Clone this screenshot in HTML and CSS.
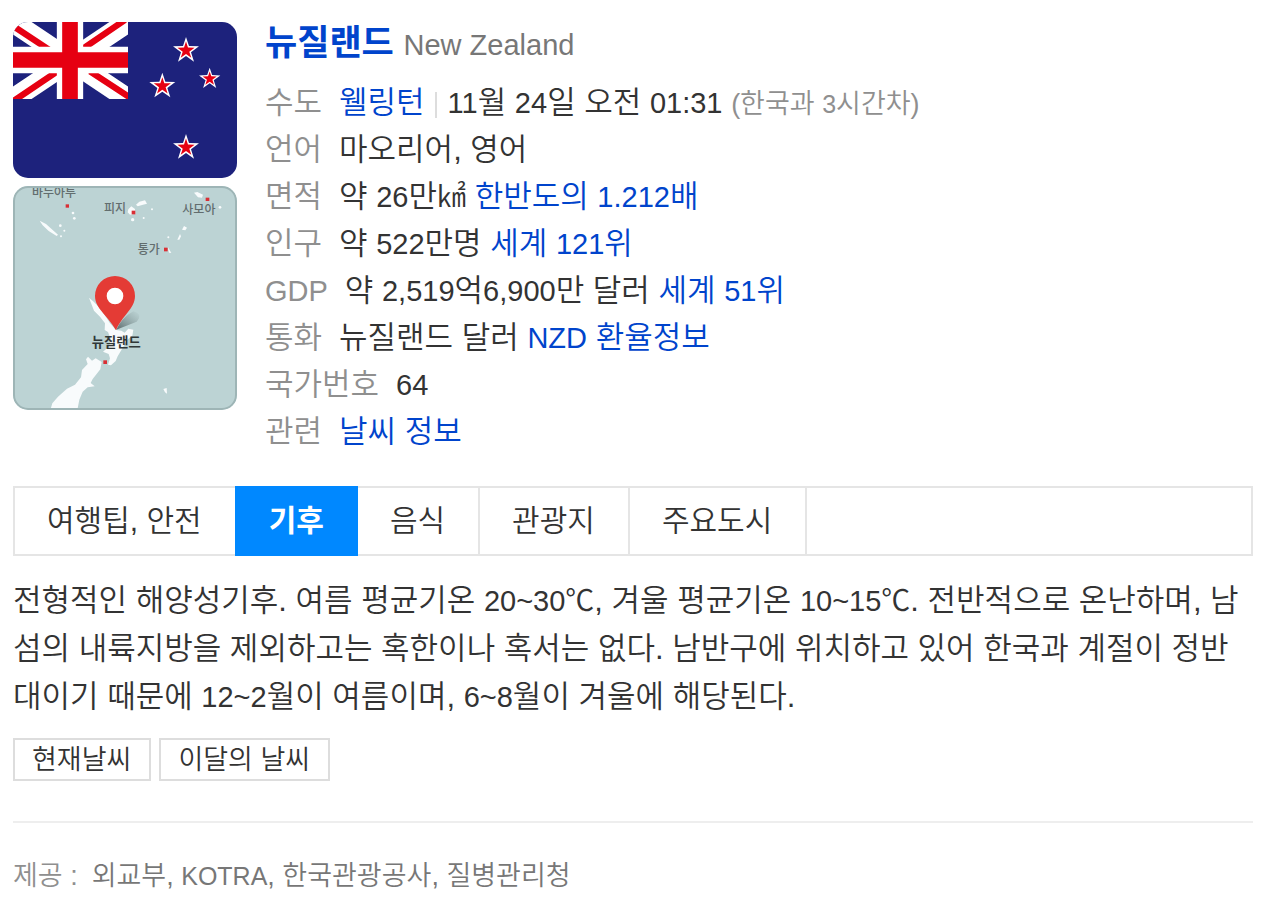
FILE: index.html
```html
<!DOCTYPE html>
<html lang="ko">
<head>
<meta charset="utf-8">
<meta name="viewport" content="width=device-width, initial-scale=1">
<title>뉴질랜드</title>
<link rel="stylesheet" href="styles.css">
</head>
<body>
<main class="card">
  <section class="summary">
    <div class="thumbs">
      <svg class="flag" viewBox="39 36 672 468" role="img" aria-label="뉴질랜드 국기">
        <defs>
          <clipPath id="canton"><rect x="39" y="36" width="345" height="231"/></clipPath>
          <polygon id="star" points="0,-40 9,-13 39,-12 15,6 24,34 0,17 -24,34 -15,6 -39,-12 -9,-13"/>
          <g id="nzstar"><use href="#star" fill="#fff"/><use href="#star" fill="#e60012" transform="scale(.66)"/></g>
        </defs>
        <rect x="39" y="36" width="672" height="468" fill="#1d227c"/>
        <g clip-path="url(#canton)">
          <path d="M39 36 384 267M39 267 384 36" stroke="#fff" stroke-width="62"/>
          <path d="M39 48 150 121M250 115 375 30M39 274 172 184M270 184 395 266" stroke="#e60012" stroke-width="19"/>
          <path d="M210 36V267M39 150H384" stroke="#fff" stroke-width="79"/>
          <path d="M210 36V267M39 150H384" stroke="#e60012" stroke-width="47"/>
        </g>
        <use href="#nzstar" x="558" y="121"/>
        <use href="#nzstar" x="487" y="228"/>
        <use href="#nzstar" transform="translate(629 206) scale(.82)"/>
        <use href="#nzstar" x="558" y="412"/>
      </svg>
      <svg class="map" viewBox="39 18 672 672" role="img" aria-label="뉴질랜드 지도">
        <defs>
          <linearGradient id="shade" x1="0" y1="1" x2="1" y2="0">
            <stop offset="0" stop-color="#4f5f60" stop-opacity=".9"/>
            <stop offset="1" stop-color="#7d9293" stop-opacity="0"/>
          </linearGradient>
        </defs>
        <rect x="39" y="18" width="672" height="672" fill="#bcd3d4"/>
        <g fill="#f8fbfc">
          <path d="M267 353 281 365 305 390 330 430 348 450 364 452 374 458 385 446 400 449 397 467 381 480 366 507 353 529 347 543 333 556 324 554 330 535 326 522 309 515 326 500 333 480 324 456 314 450 315 430 300 410 282 392Z"/>
          <path d="M264 530 276 542 287 535 305 546 301 568 278 597 272 609 284 619 263 622 248 635 238 659 232 690 151 690 157 670 174 650 201 626 225 614 243 592 246 570 263 552 258 538Z"/>
          <path d="M119 122 138 132 158 150 174 164 170 168 146 153 128 136Z"/>
          <path d="M385 88 394 79 405 87 406 101 390 104 383 97ZM408 74 418 65 435 61 441 71 429 74 413 79ZM582 38 592 36 609 44 606 53 594 52ZM546 149 552 138 561 143 556 151ZM490 627 500 624 501 641 495 637ZM532 179 540 162 543 169 538 179Z"/>
          <circle cx="219" cy="99" r="4"/><circle cx="223" cy="115" r="4"/><circle cx="181" cy="137" r="4"/><circle cx="193" cy="152" r="3"/><circle cx="183" cy="169" r="3"/><circle cx="398" cy="119" r="5"/><circle cx="431" cy="114" r="3"/><circle cx="456" cy="88" r="3"/><circle cx="660" cy="82" r="4"/><circle cx="505" cy="172" r="3"/><path d="M503 200 514 219 507 218Z"/>
        </g>
        <g fill="#d92f35">
          <rect x="197" y="73" width="10" height="10"/><rect x="395" y="92" width="11" height="11"/><rect x="617" y="53" width="11" height="10"/><rect x="492" y="203" width="11" height="11"/><rect x="310" y="541" width="11" height="11"/>
        </g>
        <g class="places">
          <text x="96" y="52">바누아투</text>
          <text x="312" y="99">피지</text>
          <text x="547" y="102">사모아</text>
          <text x="413" y="221">통가</text>
        </g>
        <path d="M349 449Q366 412 400 394Q430 403 410 425Z" fill="url(#shade)"/>
        <path d="M348 451C325 408 285 386 285 348A60 60 0 0 1 405 348C405 386 365 408 348 451Z" fill="#e43b35"/>
        <circle cx="345" cy="348" r="25" fill="#fff"/>
        <text class="here" x="275" y="500">뉴질랜드</text>
        <rect x="42" y="21" width="666" height="666" rx="42" fill="none" stroke="#9eb5b6" stroke-width="6"/>
      </svg>
    </div>
    <div class="details">
      <h1><a href="#nz">뉴질랜드</a> <span class="english">New Zealand</span></h1>
      <dl>
        <div><dt>수도</dt><dd><a href="#wellington">웰링턴</a><i class="bar"></i><span class="num">11</span>월 <span class="num">24</span>일 오전 <span class="num">01:31</span> <span class="note">(한국과 <span class="latin">3</span>시간차)</span></dd></div>
        <div><dt>언어</dt><dd>마오리어, 영어</dd></div>
        <div><dt>면적</dt><dd>약 <span class="num">26</span>만<span class="num">㎢</span> <a href="#area">한반도의 <span class="num">1.212</span>배</a></dd></div>
        <div><dt>인구</dt><dd>약 <span class="num">522</span>만명 <a href="#population">세계 <span class="num">121</span>위</a></dd></div>
        <div><dt><span class="num">GDP</span></dt><dd>약 <span class="num">2,519</span>억<span class="num">6,900</span>만 달러 <a href="#gdp">세계 <span class="num">51</span>위</a></dd></div>
        <div><dt>통화</dt><dd>뉴질랜드 달러 <a href="#currency"><span class="num">NZD</span> 환율정보</a></dd></div>
        <div><dt>국가번호</dt><dd><span class="num">64</span></dd></div>
        <div><dt>관련</dt><dd><a href="#weather">날씨 정보</a></dd></div>
      </dl>
    </div>
  </section>
  <div class="tabs" role="tablist">
    <button type="button" role="tab" aria-selected="false">여행팁, 안전</button>
    <button type="button" role="tab" aria-selected="true" class="active">기후</button>
    <button type="button" role="tab" aria-selected="false">음식</button>
    <button type="button" role="tab" aria-selected="false">관광지</button>
    <button type="button" role="tab" aria-selected="false">주요도시</button>
  </div>
  <p class="climate">전형적인 해양성기후. 여름 평균기온 <span class="num">20~30℃</span>, 겨울 평균기온 <span class="num">10~15℃</span>. 전반적으로 온난하며, 남섬의 내륙지방을 제외하고는 혹한이나 혹서는 없다. 남반구에 위치하고 있어 한국과 계절이 정반대이기 때문에 <span class="num">12~2</span>월이 여름이며, <span class="num">6~8</span>월이 겨울에 해당된다.</p>
  <div class="more">
    <a href="#now">현재날씨</a>
    <a href="#month">이달의 날씨</a>
  </div>
  <footer><span class="by">제공 :</span><span>외교부, <span class="latin">KOTRA</span>, 한국관광공사, 질병관리청</span></footer>
</main>
</body>
</html>
```

FILE: styles.css
```css
* { box-sizing: border-box; }

body {
  margin: 0;
  background: #fff;
  color: #333;
  font-family: "Liberation Sans", "Noto Sans CJK KR", sans-serif;
  font-size: 31px;
  font-weight: 350;
  line-height: 47px;
}

a { color: #04c; text-decoration: none; }

.card { padding: 22px 9px 0 13px; }

.summary { display: flex; gap: 28px; }

.thumbs {
  display: flex;
  flex: none;
  flex-direction: column;
  gap: 8px;
  width: 224px;
}

.thumbs svg { display: block; width: 100%; border-radius: 15px; }
.places, .here { font-family: "Noto Sans CJK KR", sans-serif; }
.places { font-size: 36px; font-weight: 500; fill: #626d6e; }
.here { font-size: 40px; font-weight: 700; fill: #303838; }

.details { flex: 1; min-width: 0; }

h1 {
  margin: 0 0 15px;
  font-size: 35px;
  line-height: 42px;
}

.english { color: #777; font-size: 29px; font-weight: 400; line-height: 1; }

dl { margin: 0; }
dl div { display: flex; gap: 17px; }
dt { flex: none; color: #8f8f8f; }
dd { margin: 0; }
.num { font-size: 29px; line-height: 1; }
.note { color: #8f8f8f; font-size: 27px; line-height: 1; }

.bar {
  display: inline-block;
  width: 2px;
  height: 26px;
  margin: 0 11px 0 10px;
  background: #ddd;
  vertical-align: -5px;
}

.tabs {
  display: flex;
  height: 70px;
  margin-top: 31px;
  border: 2px solid #e5e5e5;
}

.tabs button {
  padding: 0 33px 2px 32px;
  border: 0;
  border-right: 2px solid #e5e5e5;
  background: none;
  color: #333;
  font: inherit;
  font-size: 30px;
}

.tabs .active {
  margin: -2px 0 -2px -2px;
  padding: 0 34px 2px;
  border-right: 0;
  background: #08f;
  color: #fff;
  font-weight: 700;
}

.climate {
  margin: 21px 0 17px;
  line-height: 48px;
  word-break: break-all;
}

.more { display: flex; gap: 8px; }

.more a {
  padding: 1px 18px 0 17px;
  border: 2px solid #ddd;
  color: #333;
  font-size: 27px;
  line-height: 38px;
}

footer {
  display: flex;
  gap: 14px;
  margin-top: 40px;
  padding: 30px 0 2px;
  border-top: 2px solid #eee;
  color: #777;
  font-size: 27px;
}

.by { color: #8f8f8f; }
.latin { font-size: 25px; line-height: 1; }
```
